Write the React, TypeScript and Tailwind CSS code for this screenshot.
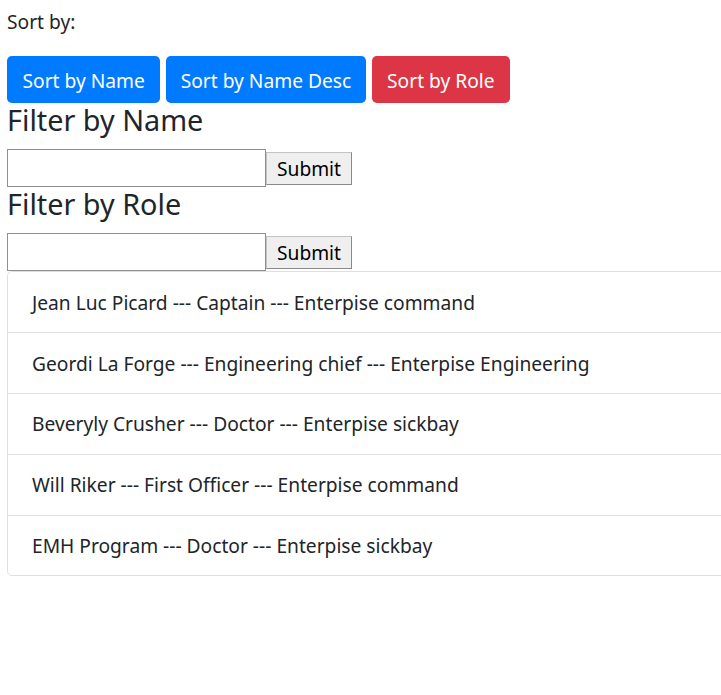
import React from 'react';

const crew = [
  'Jean Luc Picard --- Captain --- Enterpise command',
  'Geordi La Forge --- Engineering chief --- Enterpise Engineering',
  'Beveryly Crusher --- Doctor --- Enterpise sickbay',
  'Will Riker --- First Officer --- Enterpise command',
  'EMH Program --- Doctor --- Enterpise sickbay',
];

function FilterForm({ label }: { label: string }) {
  return (
    <div>
      <h4 className="text-[28.8px] leading-[1.2] mb-[11.5px]">{label}</h4>
      <div className="flex items-center">
        <input
          type="text"
          className="w-[259px] h-[38px] border border-[#8f8f8f] bg-white outline-none"
        />
        <button className="h-[33px] w-[86px] mt-[1px] bg-[#efefef] border border-[#c3c3c3] border-r-[#8a8a8a] border-b-[#8a8a8a] text-[19.2px] leading-none text-black">
          Submit
        </button>
      </div>
    </div>
  );
}

export default function App() {
  return (
    <div
      className="min-h-screen bg-white text-[#212529] text-[19.2px] leading-[1.5] pt-[8px] pl-[7px] overflow-hidden"
      style={{ fontFamily: '"Noto Sans", "Open Sans", sans-serif' }}
    >
      <p className="mb-[19.5px]">Sort by:</p>
      <div className="flex gap-[6px]">
        <button className="h-[47px] px-[15.5px] pt-[3px] rounded-[4.8px] bg-[#007bff] text-white">
          Sort by Name
        </button>
        <button className="h-[47px] px-[14.4px] pt-[3px] rounded-[4.8px] bg-[#007bff] text-white">
          Sort by Name Desc
        </button>
        <button className="h-[47px] px-[15.5px] pt-[3px] rounded-[4.8px] bg-[#dc3545] text-white">
          Sort by Role
        </button>
      </div>
      <FilterForm label="Filter by Name" />
      <FilterForm label="Filter by Role" />
      <ul className="w-[730px] border border-[#dfdfdf] rounded-[4.8px]">
        {crew.map((c, i) => (
          <li
            key={i}
            className={`px-[24px] pt-[16.5px] pb-[14.5px] leading-[1.5] ${i > 0 ? 'border-t border-[#dfdfdf]' : ''}`}
          >
            {c}
          </li>
        ))}
      </ul>
    </div>
  );
}
